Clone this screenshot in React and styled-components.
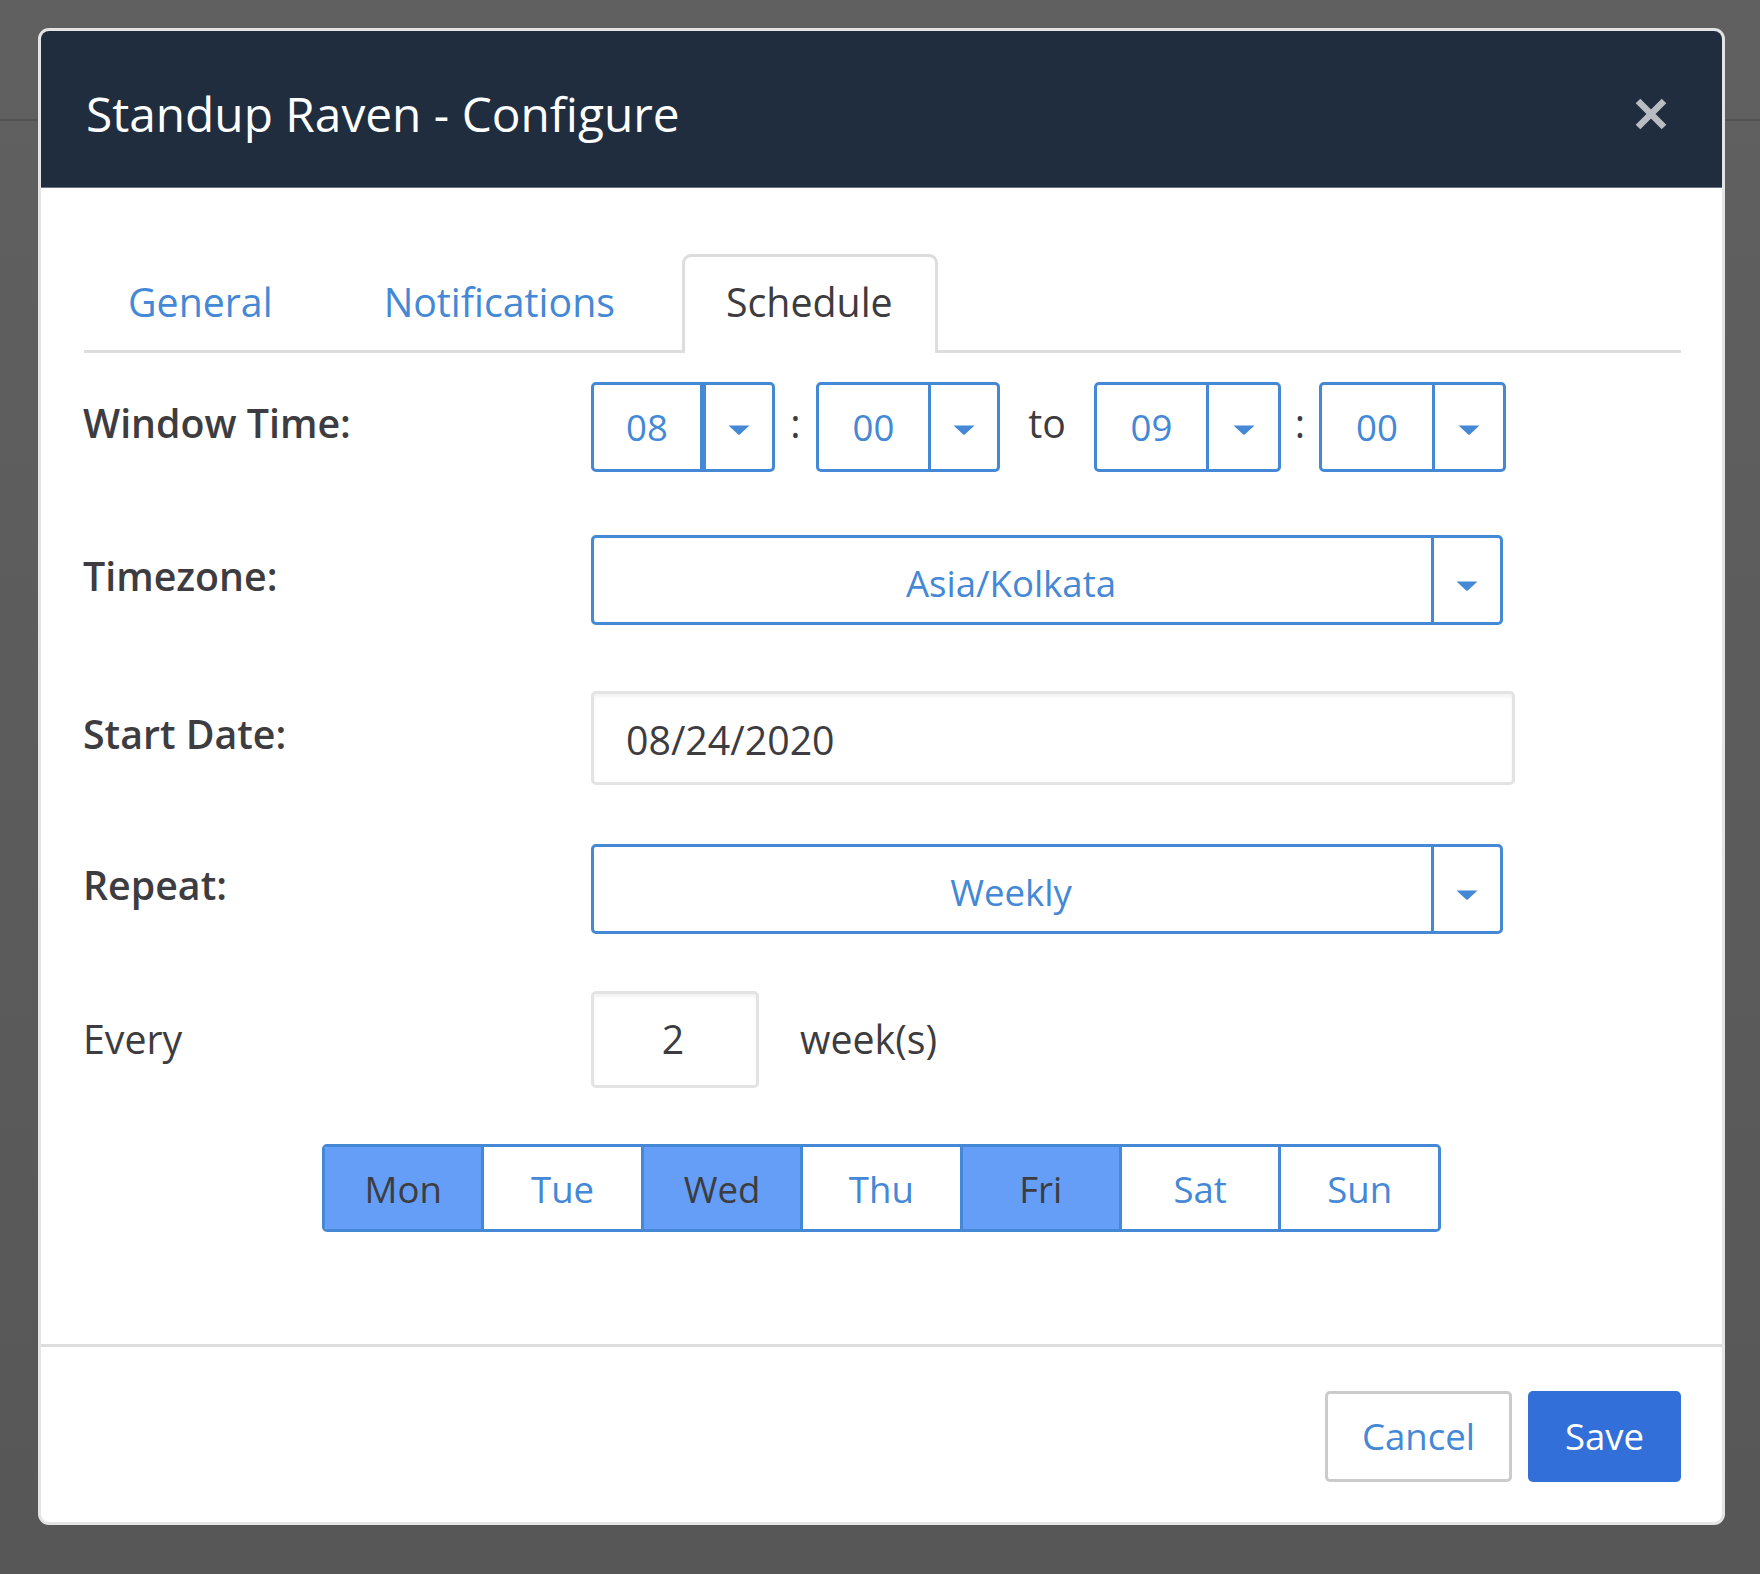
import React from "react";
import styled, { createGlobalStyle } from "styled-components";

const Global = createGlobalStyle`
  html, body {
    margin: 0;
    padding: 0;
  }
  body {
    font-family: "Open Sans", "Noto Sans", sans-serif;
    color: #3d3c40;
    background: linear-gradient(180deg, #606060 0%, #575757 100%);
  }
  * {
    box-sizing: border-box;
  }
`;

const Page = styled.div`
  position: relative;
  height: 1574px;
  overflow: hidden;
`;

const BackdropBar = styled.div`
  height: 121px;
  border-bottom: 2px solid #535353;
`;

const Modal = styled.div`
  position: absolute;
  left: 38px;
  top: 28px;
  width: 1687px;
  height: 1497px;
  display: flex;
  flex-direction: column;
  background: #fff;
  border: 3px solid #e4e4e4;
  border-radius: 11px;
  overflow: hidden;
`;

const Header = styled.div`
  height: 157px;
  flex: none;
  display: flex;
  align-items: center;
  justify-content: space-between;
  padding: 8px 55px 0 45px;
  background: #202d3e;
  border-bottom: 1px solid #6b7380;
`;

const Title = styled.h1`
  margin: 0;
  font-size: 47.8px;
  font-weight: 400;
  color: #fff;
`;

const Close = styled.svg`
  width: 32px;
  height: 32px;
  margin-top: 2px;
  display: block;
`;

const Body = styled.div`
  flex: 1;
  padding: 66px 41px 0 43px;
`;

const Tabs = styled.div`
  display: flex;
  align-items: flex-start;
  height: 99px;
  border-bottom: 3px solid #ddd;
`;

const Tab = styled.div`
  display: flex;
  align-items: center;
  height: 96px;
  padding: 0 44px;
  margin-right: 23px;
  font-size: 39.3px;
  color: #4488d6;
  background: #fff;
`;

const ActiveTab = styled(Tab)`
  height: 99px;
  padding: 0 42px 7px 41px;
  margin: 0;
  color: #3d3c40;
  border: 3px solid #ddd;
  border-bottom: 0;
  border-radius: 9px 9px 0 0;
`;

const Row = styled.div`
  display: grid;
  grid-template-columns: 507px 1fr;
  align-items: center;
  margin-top: ${(p) => p.$top}px;
`;

const Label = styled.div`
  margin-left: -1px;
  font-size: 39.3px;
  font-weight: ${(p) => (p.$plain ? 400 : 600)};
  padding-bottom: ${(p) => (p.$plain ? 2 : 9)}px;
  white-space: nowrap;
`;

const Fields = styled.div`
  display: flex;
  align-items: center;
  font-size: 39.3px;
`;

const Select = styled.div`
  display: flex;
  width: ${(p) => p.$width}px;
  height: 90px;
  border: 3px solid #4488d6;
  border-radius: 5px;
  color: #4488d6;
`;

const SelectValue = styled.div`
  flex: 1;
  display: flex;
  align-items: center;
  justify-content: center;
  padding: ${(p) => (p.$wide ? "6px 3px 0 0" : "0")};
  font-size: 36.6px;
`;

const SelectCaret = styled.div`
  flex: none;
  width: ${(p) => p.$width}px;
  display: flex;
  align-items: center;
  justify-content: center;
  padding-top: ${(p) => (p.$wide ? 12 : 6)}px;
  border-left: ${(p) => p.$divider || 3}px solid #4488d6;
`;

const Caret = styled.svg`
  width: 22px;
  height: 10px;
  display: block;
`;

const Separator = styled.div`
  width: ${(p) => p.$width}px;
  text-align: center;
  padding-bottom: 8px;
  flex: none;
`;

const Suffix = styled.div`
  margin-left: 41px;
  padding-bottom: 2px;
`;

const TextInput = styled.input`
  display: block;
  width: 924px;
  height: 94px;
  padding: 3px 32px 0;
  border: 3px solid #e3e3e3;
  border-radius: 5px;
  box-shadow: inset 0 3px 3px rgba(0, 0, 0, 0.05);
  outline: none;
  font-family: inherit;
  font-size: 39.3px;
  color: #3d3c40;
`;

const CountInput = styled(TextInput)`
  width: 168px;
  height: 97px;
  padding: 0 4px 2px 0;
  text-align: center;
`;

const DayStrip = styled.div`
  display: grid;
  grid-template-columns: repeat(6, 159.4px) 1fr;
  width: 1119px;
  height: 88px;
  margin: 56px 0 0 238px;
  border: 3px solid #4488d6;
  border-radius: 5px;
  overflow: hidden;
`;

const Day = styled.div`
  display: flex;
  align-items: center;
  justify-content: center;
  padding-top: 1px;
  font-size: 36.6px;
  color: ${(p) => (p.$on ? "#3d3c40" : "#4488d6")};
  background: ${(p) => (p.$on ? "#659ef6" : "#fff")};
  border-right: 3px solid #4488d6;
  &:last-child {
    border-right: 0;
  }
`;

const Footer = styled.div`
  flex: none;
  height: 178px;
  display: flex;
  justify-content: flex-end;
  align-items: flex-start;
  gap: 16px;
  padding: 44px 41px 0 0;
  border-top: 3px solid #ddd;
`;

const Button = styled.button`
  width: ${(p) => p.$width}px;
  height: 91px;
  padding: 0 0 2px;
  font-family: inherit;
  font-size: 36.6px;
  border-radius: 5px;
  color: ${(p) => (p.$primary ? "#fff" : "#4488d6")};
  background: ${(p) => (p.$primary ? "#326fd9" : "#fff")};
  border: ${(p) => (p.$primary ? "none" : "3px solid #cbcbcb")};
`;

const days = [
  ["Mon", true],
  ["Tue", false],
  ["Wed", true],
  ["Thu", false],
  ["Fri", true],
  ["Sat", false],
  ["Sun", false],
];

const Dropdown = ({ value, width, caretWidth, divider, wide }) => (
  <Select $width={width}>
    <SelectValue $wide={wide}>{value}</SelectValue>
    <SelectCaret $width={caretWidth} $divider={divider} $wide={wide}>
      <Caret viewBox="0 0 22 10">
        <path d="M0.5 0.5 H21.5 L11.8 9.5 Q11 10 10.2 9.5 Z" fill="#4488d6" />
      </Caret>
    </SelectCaret>
  </Select>
);

export default function App() {
  return (
    <Page>
      <Global />
      <BackdropBar />
      <Modal>
        <Header>
          <Title>Standup Raven - Configure</Title>
          <Close viewBox="0 0 32 32">
            <path
              d="M3 3 L29 29 M29 3 L3 29"
              stroke="#b9bcc1"
              strokeWidth="6.5"
              fill="none"
            />
          </Close>
        </Header>
        <Body>
          <Tabs>
            <Tab>General</Tab>
            <Tab>Notifications</Tab>
            <ActiveTab>Schedule</ActiveTab>
          </Tabs>
          <Row $top={29}>
            <Label>Window Time:</Label>
            <Fields>
              <Dropdown value="08" width={184} caretWidth={72} divider={6} />
              <Separator $width={41}>:</Separator>
              <Dropdown value="00" width={184} caretWidth={69} />
              <Separator $width={94}>to</Separator>
              <Dropdown value="09" width={187} caretWidth={72} />
              <Separator $width={38}>:</Separator>
              <Dropdown value="00" width={187} caretWidth={71} />
            </Fields>
          </Row>
          <Row $top={63}>
            <Label>Timezone:</Label>
            <Fields>
              <Dropdown value="Asia/Kolkata" width={912} caretWidth={69} wide />
            </Fields>
          </Row>
          <Row $top={66}>
            <Label>Start Date:</Label>
            <Fields>
              <TextInput defaultValue="08/24/2020" />
            </Fields>
          </Row>
          <Row $top={59}>
            <Label>Repeat:</Label>
            <Fields>
              <Dropdown value="Weekly" width={912} caretWidth={69} wide />
            </Fields>
          </Row>
          <Row $top={57}>
            <Label $plain>Every</Label>
            <Fields>
              <CountInput defaultValue="2" />
              <Suffix>week(s)</Suffix>
            </Fields>
          </Row>
          <DayStrip>
            {days.map(([name, on]) => (
              <Day key={name} $on={on}>
                {name}
              </Day>
            ))}
          </DayStrip>
        </Body>
        <Footer>
          <Button $width={187}>Cancel</Button>
          <Button $width={153} $primary>
            Save
          </Button>
        </Footer>
      </Modal>
    </Page>
  );
}
